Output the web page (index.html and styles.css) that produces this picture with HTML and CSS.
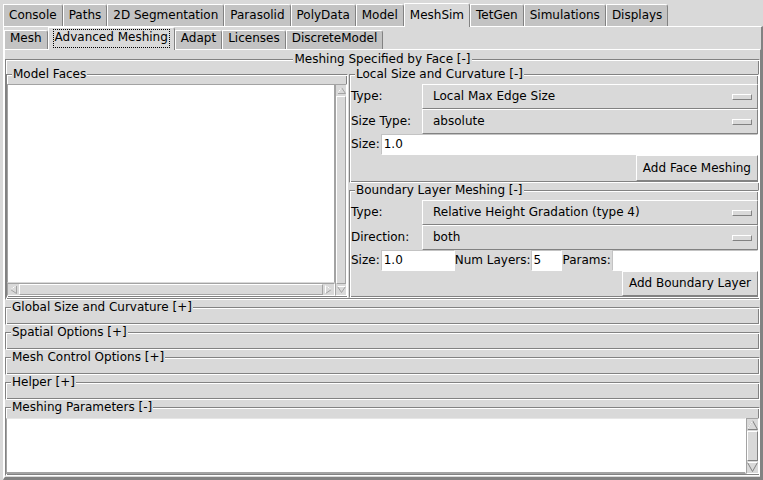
FILE: index.html
```html
<!DOCTYPE html>
<html>
<head>
<meta charset="utf-8">
<title>MeshSim - Advanced Meshing</title>
<link rel="stylesheet" href="styles.css">
</head>
<body>
<div class="tabbar top">
  <div class="tab">Console</div>
  <div class="tab">Paths</div>
  <div class="tab">2D Segmentation</div>
  <div class="tab">Parasolid</div>
  <div class="tab">PolyData</div>
  <div class="tab">Model</div>
  <div class="tab sel">MeshSim</div>
  <div class="tab">TetGen</div>
  <div class="tab">Simulations</div>
  <div class="tab">Displays</div>
</div>
<div class="panel outer">
  <div class="tabbar sub">
    <div class="tab">Mesh</div>
    <div class="tab sel"><div class="focus">Advanced Meshing</div></div>
    <div class="tab">Adapt</div>
    <div class="tab">Licenses</div>
    <div class="tab">DiscreteModel</div>
  </div>
  <div class="panel inner">
    <fieldset class="lf spec">
      <legend class="center">Meshing Specified by Face [-]</legend>
      <div class="spec-body">
        <fieldset class="lf faces">
          <legend>Model Faces</legend>
          <div class="listgrid">
            <div class="list"></div>
            <div class="vs small">
              <div class="arr"><svg width="9" height="7" viewBox="0 0 9 7"><path d="M4.5 0.5 L8.5 6.5 H0.5 Z" fill="#d9d9d9" stroke="#a3a3a3"/><path d="M0.5 6.5 L4.5 0.5" stroke="#fff" fill="none"/></svg></div>
              <div class="thumb"></div>
              <div class="arr"><svg width="9" height="7" viewBox="0 0 9 7"><path d="M0.5 0.5 H8.5 L4.5 6.5 Z" fill="#d9d9d9" stroke="#a3a3a3"/><path d="M0.5 0.5 H8.5" stroke="#fff" fill="none"/></svg></div>
            </div>
            <div class="hs">
              <div class="arr"><svg width="7" height="9" viewBox="0 0 7 9"><path d="M0.5 4.5 L6.5 0.5 V8.5 Z" fill="#d9d9d9" stroke="#a3a3a3"/><path d="M0.5 4.5 L6.5 0.5" stroke="#fff" fill="none"/></svg></div>
              <div class="thumb"></div>
              <div class="arr"><svg width="7" height="9" viewBox="0 0 7 9"><path d="M0.5 0.5 L6.5 4.5 L0.5 8.5 Z" fill="#d9d9d9" stroke="#a3a3a3"/><path d="M0.5 8.5 V0.5 L6.5 4.5" stroke="#fff" fill="none"/></svg></div>
            </div>
          </div>
        </fieldset>
        <div class="rcol">
          <fieldset class="lf local">
            <legend>Local Size and Curvature [-]</legend>
            <div class="row"><span class="lbl">Type:</span><div class="opt"><span>Local Max Edge Size</span><span class="ind"></span></div></div>
            <div class="row"><span class="lbl">Size Type:</span><div class="opt"><span>absolute</span><span class="ind"></span></div></div>
            <div class="row"><span class="lbl short">Size:</span><div class="entry grow">1.0</div></div>
            <div class="row end"><div class="btn">Add Face Meshing</div></div>
          </fieldset>
          <fieldset class="lf bl">
            <legend>Boundary Layer Meshing [-]</legend>
            <div class="row"><span class="lbl">Type:</span><div class="opt"><span>Relative Height Gradation (type 4)</span><span class="ind"></span></div></div>
            <div class="row"><span class="lbl">Direction:</span><div class="opt"><span>both</span><span class="ind"></span></div></div>
            <div class="row"><span class="lbl short">Size:</span><div class="entry e-size">1.0</div><span class="lbl plain">Num Layers:</span><div class="entry e-num">5</div><span class="lbl short">Params:</span><div class="entry grow"></div></div>
            <div class="row end"><div class="btn b2">Add Boundary Layer</div></div>
          </fieldset>
        </div>
      </div>
    </fieldset>
    <fieldset class="lf coll"><legend>Global Size and Curvature [+]</legend><div class="empty"></div></fieldset>
    <fieldset class="lf coll"><legend>Spatial Options [+]</legend><div class="empty"></div></fieldset>
    <fieldset class="lf coll"><legend>Mesh Control Options [+]</legend><div class="empty"></div></fieldset>
    <fieldset class="lf coll"><legend>Helper [+]</legend><div class="empty"></div></fieldset>
    <fieldset class="lf params">
      <legend>Meshing Parameters [-]</legend>
      <div class="tarea">
        <div class="text"></div>
        <div class="vs big">
          <div class="arr"><svg width="11" height="10" viewBox="0 0 11 10"><path d="M5.5 0.5 L10.5 9.5 H0.5 Z" fill="#d9d9d9" stroke="#828282"/><path d="M0.5 9.5 L5.5 0.5" stroke="#fff" fill="none"/></svg></div>
          <div class="thumb"></div>
          <div class="arr"><svg width="11" height="10" viewBox="0 0 11 10"><path d="M0.5 0.5 H10.5 L5.5 9.5 Z" fill="#d9d9d9" stroke="#828282"/><path d="M0.5 0.5 H10.5" stroke="#fff" fill="none"/></svg></div>
        </div>
      </div>
    </fieldset>
  </div>
</div>
</body>
</html>
```
FILE: styles.css
```css
* { box-sizing: border-box; }
html, body { margin: 0; padding: 0; }
body {
  width: 763px;
  height: 480px;
  overflow: hidden;
  background: #d9d9d9;
  font-family: "DejaVu Sans", sans-serif;
  font-size: 12px;
  line-height: 15px;
  color: #000;
}

/* notebook tabs */
.tabbar { display: flex; align-items: flex-end; }
.tabbar.top { height: 26px; padding-left: 3px; }
.tabbar.sub { height: 22px; }
.tab {
  background: #c3c3c3;
  border-top: 1px solid #fff;
  border-left: 1px solid #fff;
  border-right: 1px solid #828282;
  border-top-right-radius: 3px;
  padding: 0 5px;
  white-space: nowrap;
}
.top .tab { padding-top: 3px; padding-bottom: 3px; }
.top .tab.sel { padding-top: 4px; padding-bottom: 4px; margin-bottom: -1px; }
.sub .tab { padding-bottom: 3px; }
.sub .tab.sel { padding: 1px 4px 2px; margin-bottom: -1px; }
.tab.sel { background: #d9d9d9; position: relative; z-index: 1; }
.focus { border: 1px dotted #000; padding: 0 1px 2px; }

/* notebook panels */
.panel { border: 1px solid; border-color: #fff #828282 #828282 #fff; }
.outer { margin-left: 3px; height: 454px; border-width: 1px 2px 2px 1px; }
.inner { height: 429px; }

/* labelframes */
fieldset.lf {
  margin: 0;
  padding: 0;
  min-width: 0;
  border: 1px solid;
  border-color: #828282 #fff #fff #828282;
  box-shadow: inset 1px 1px 0 #fff, inset -1px -1px 0 #828282;
}
fieldset.lf > legend {
  padding: 0 1px;
  margin-left: 5px;
  background: #d9d9d9;
  line-height: 15px;
}
fieldset.lf > legend.center { margin-left: auto; margin-right: auto; }

fieldset.lf.spec { margin-top: 2px; padding-bottom: 1px; }
.spec-body { display: flex; gap: 1px; }
fieldset.lf.faces { width: 342px; padding-top: 2px; }
.rcol { flex: 1; display: flex; flex-direction: column; }
fieldset.lf.local, fieldset.lf.bl { padding-top: 2px; padding-bottom: 1px; }

/* model faces list */
.listgrid {
  display: grid;
  grid-template-columns: 1fr 12px;
  grid-template-rows: 199px 13px;
}
.list {
  background: #fff;
  border: 1px solid;
  border-color: #a3a3a3 #a3a3a3 #d9d9d9 #a3a3a3;
}
.listgrid .vs { grid-column: 2; grid-row: 1 / 3; }
.listgrid .hs { grid-column: 1; grid-row: 2; }

/* scrollbars */
.vs, .hs {
  display: flex;
  background: #d9d9d9;
  border: 1px solid;
  border-color: #a3a3a3 #fff #fff #a3a3a3;
}
.vs { flex-direction: column; }
.vs .arr { display: flex; align-items: center; justify-content: center; flex: none; }
.vs.small .arr { height: 11px; }
.vs.big { width: 13px; }
.vs.big .arr { height: 12px; }
.hs .arr { width: 11px; display: flex; align-items: center; justify-content: center; flex: none; }
.thumb {
  flex: 1;
  background: #d9d9d9;
  border: 1px solid;
  border-color: #fff #a3a3a3 #a3a3a3 #fff;
}
.vs.big .thumb { border-color: #fff #828282 #828282 #fff; }

/* rows of widgets */
.row { display: flex; align-items: center; }
.row.end { justify-content: flex-end; }
.lbl { width: 72px; padding-left: 1px; white-space: nowrap; flex: none; }
.lbl.short { width: auto; padding: 0 1px; }
.lbl.plain { width: auto; padding: 0; }
.opt {
  flex: 1;
  height: 25px;
  display: flex;
  align-items: center;
  justify-content: space-between;
  padding: 0 5px 0 10px;
  border: 1px solid;
  border-color: #fff #828282 #828282 #fff;
  white-space: nowrap;
}
.ind {
  width: 20px;
  height: 6px;
  border: 1px solid;
  border-color: #fff #828282 #828282 #fff;
}
.entry {
  height: 21px;
  background: #fff;
  padding: 0 2px;
  border: 1px solid;
  border-color: #c3c3c3 #fff #fff #c3c3c3;
  display: flex;
  align-items: center;
  white-space: nowrap;
}
.entry.grow { flex: 1; }
.e-size { width: 74px; }
.e-num { width: 31px; }
.btn {
  height: 26px;
  padding: 0 6px;
  display: flex;
  align-items: center;
  border: 1px solid;
  border-color: #fff #828282 #828282 #fff;
  white-space: nowrap;
}
.btn.b2 { height: 25px; }

/* collapsed frames */
.coll .empty { height: 9px; }

/* meshing parameters */
fieldset.lf.params { padding-top: 3px; padding-bottom: 1px; }
.tarea { display: flex; height: 56px; }
.text {
  flex: 1;
  background: #fff;
  border-style: solid;
  border-width: 1px 1px 2px 1px;
  border-color: #e6e6e6 #fff #a3a3a3 #a3a3a3;
}
```
